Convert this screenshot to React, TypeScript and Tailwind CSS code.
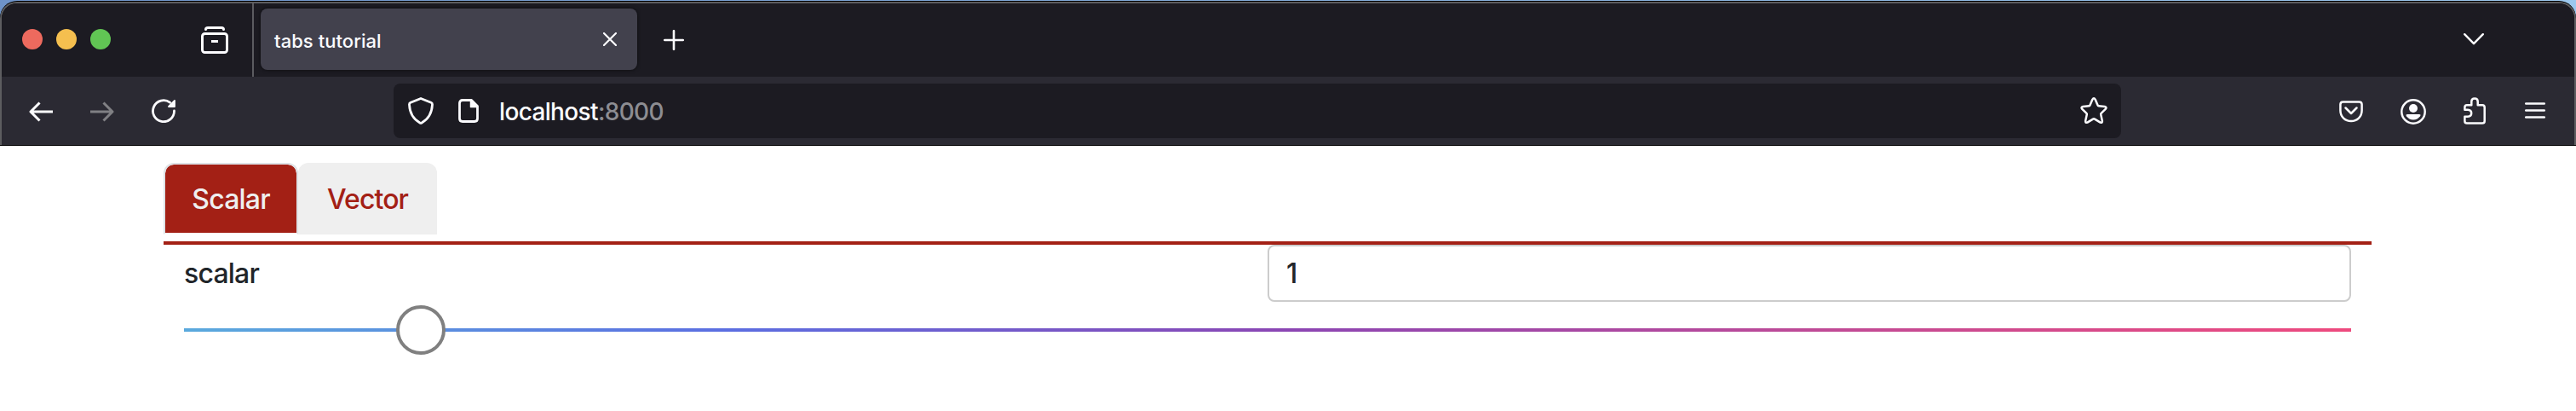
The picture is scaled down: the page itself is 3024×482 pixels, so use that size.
import type { ReactNode } from "react";

type IconProps = { w: number; h: number; className?: string; children: ReactNode };

function Icon({ w, h, className = "", children }: IconProps) {
  return (
    <svg
      width={w}
      height={h}
      viewBox={`0 0 ${w} ${h}`}
      fill="none"
      stroke="currentColor"
      strokeWidth={2.5}
      strokeLinecap="round"
      strokeLinejoin="round"
      className={`block shrink-0 ${className}`}
    >
      {children}
    </svg>
  );
}

function TabStrip() {
  return (
    <div className="flex h-[86px] bg-[#1c1b22]">
      <div className="flex w-[294px] items-center gap-4 pb-0.5 pl-6">
        <span className="size-6 rounded-full bg-[#ed6a5e]" />
        <span className="size-6 rounded-full bg-[#f5bf4f]" />
        <span className="size-6 rounded-full bg-[#61c554]" />
        <Icon w={32} h={32} className="ml-[90px] mt-0.5">
          <path d="M5.5 3.5C5.5 2 6.500 1.500 8 1.500H24C25.500 1.500 26.500 2 26.500 3.500" strokeWidth={3} />
          <rect x="1.500" y="8.500" width="29" height="22" rx="3" strokeWidth={3} />
          <path d="M12 17.500H20" strokeWidth={3} strokeLinecap="butt" />
        </Icon>
      </div>
      <div className="w-0.5 bg-[#5b5b60]" />
      <div className="ml-2 mt-1.5 flex h-[72px] w-[442px] items-center rounded-lg bg-[#42414d] pl-4 pr-6 shadow-[0_0_4px_rgba(0,0,0,0.6)]">
        <span className="mt-1 flex-1 font-['Inter'] text-[22px] font-medium leading-none tracking-[0.05px] text-[#fbfbfe]">
          tabs tutorial
        </span>
        <Icon w={16} h={16} className="text-[#fbfbfe]">
          <path d="M1 1L15 15M15 1L1 15" strokeWidth={2.2} />
        </Icon>
      </div>
      <Icon w={24} h={24} className="ml-[31px] mt-[31px]">
        <path d="M12 1.200V22.800M1.200 12H22.800" strokeWidth={2.600} />
      </Icon>
      <Icon w={24} h={14} className="ml-auto mr-[106px] mt-[35px]">
        <path d="M1.200 1.200L12 12.200L22.800 1.200" strokeWidth={2.400} />
      </Icon>
    </div>
  );
}

function AddressBar() {
  return (
    <div className="flex h-16 w-[2028px] items-center rounded-lg bg-[#1c1b22] pl-[17px] pr-4">
      <Icon w={30} h={32}>
        <path d="M15 1.500L27 6.300C28.200 6.800 28.600 7.600 28.500 8.800C28 18.500 24.500 25.500 15.800 30.200Q15 30.600 14.200 30.200C5.500 25.500 2 18.500 1.500 8.800C1.400 7.600 1.800 6.800 3 6.300Z" strokeWidth={2.800} />
      </Icon>
      <Icon w={24} h={28} className="ml-[29px]">
        <path d="M15.500 1.500H5Q1.500 1.500 1.500 5V23Q1.500 26.500 5 26.500H19Q22.500 26.500 22.500 23V8.500Z" strokeWidth={2.800} />
        <path d="M14.500 1.500V9.500H22.500Z" fill="currentColor" strokeWidth={1.500} />
      </Icon>
      <span className="ml-6 mt-0.5 flex-1 font-['Inter'] text-[28px] font-[450] leading-none tracking-[-0.65px] text-[#fbfbfe]">
        localhost<span className="text-[#8d8d92]">:8000</span>
      </span>
      <Icon w={32} h={32}>
        <path d="M14.400 2.600Q16 0 17.600 2.600L20.500 9.300Q20.800 10.100 21.700 10.200L28.800 11Q31.600 11.600 29.700 13.900L24.600 18.800Q24 19.400 24.200 20.300L25.800 27.600Q26.200 30.600 23.600 29.600L17 25.600Q16 25.100 15 25.600L8.400 29.600Q5.800 30.600 6.200 27.600L7.800 20.300Q8 19.400 7.400 18.800L2.300 13.900Q.4 11.600 3.200 11L10.300 10.200Q11.200 10.100 11.500 9.300Z" />
      </Icon>
    </div>
  );
}

function Toolbar() {
  return (
    <div className="flex h-20 items-center bg-[#2b2a33] pl-8">
      <Icon w={28} h={24} className="mt-px">
        <path d="M12.500 1.500L2 12L12.500 22.500M2 12H28" strokeWidth={3} strokeLinecap="butt" />
      </Icon>
      <Icon w={28} h={24} className="ml-11 mt-px text-[#808084]">
        <path d="M15.500 1.500L26 12L15.500 22.500M26 12H0" strokeWidth={3} strokeLinecap="butt" />
      </Icon>
      <Icon w={28} h={28} className="ml-11">
        <path d="M26.500 14A12.500 12.500 0 1 1 21.500 4.200" strokeWidth={2.800} />
        <path d="M27 2V9H20Z" fill="currentColor" strokeWidth={1.800} />
      </Icon>
      <div className="ml-64">
        <AddressBar />
      </div>
      <div className="ml-auto mr-[34px] flex items-center">
        <Icon w={28} h={26} className="mt-px">
          <path d="M4.500 1.500H23.500Q26.600 1.500 26.600 4.500V11.500C26.600 19 21 24 14 24S1.400 19 1.400 11.500V4.500Q1.400 1.500 4.500 1.500Z" />
          <path d="M7.500 8.500L14 15L20.500 8.500" />
        </Icon>
        <Icon w={30} h={30} className="ml-11 mt-0.5">
          <circle cx="15" cy="15" r="13.700" />
          <circle cx="15" cy="11" r="5" fill="currentColor" stroke="none" />
          <path d="M8.300 18H21.700Q24.500 18 23 20.300Q20 24.500 15 24.500T7 20.300Q5.500 18 8.300 18Z" fill="currentColor" stroke="none" />
        </Icon>
        <Icon w={26} h={32} className="ml-11">
          <path d="M1.400 14.800V12Q1.400 9.300 4 9.300H9.300V5Q9.300 1.400 13 1.400T16.700 5V9.300H22Q24.700 9.300 24.700 12V28Q24.700 30.600 22 30.600H4Q1.400 30.600 1.400 28V22.800H5Q9.200 22.500 9.200 18.800T5 14.800Z" />
        </Icon>
        <Icon w={24} h={20} className="ml-[46px]">
          <path d="M1.200 1.500H22.800M1.200 9.500H22.800M1.200 17.500H22.800" />
        </Icon>
      </div>
    </div>
  );
}

function Page() {
  return (
    <main className="flex flex-1 flex-col bg-white pr-[240px] pt-5 pl-[192px] font-['Inter'] text-[32px] font-[450] leading-none">
      <div className="flex h-[92px]">
        <button className="h-[84px] w-[158px] rounded-t-xl border-2 border-b-white border-[#dee2e6] bg-[#a32015] bg-clip-padding pt-0.5 text-[#efefef] tracking-[-0.8px]">
          Scalar
        </button>
        <button className="h-[84px] w-[163px] rounded-t-xl bg-[#efefef] pt-0.5 text-[#a32015] tracking-[-0.9px]">
          Vector
        </button>
      </div>
      <div className="h-1 bg-[#a32015]" />
      <div className="flex px-6">
        <label htmlFor="scalar" className="w-[1272px] pt-[18px] tracking-[-0.8px] text-[#212529]">
          scalar
        </label>
        <input
          id="scalar"
          defaultValue="1"
          className="h-[67px] w-[1272px] rounded-lg border-2 border-[#cccccc] pl-5 text-[#212529] outline-none"
        />
      </div>
      <div className="mx-6 mt-1 flex h-[58px] items-center bg-[linear-gradient(to_right,#5aa9dd_0%,#5b6ee1_25%,#8b46b3_51%,#c04a95_76%,#ee4a7e_100%)] bg-[length:100%_4px] bg-center bg-no-repeat pl-[249px]">
        <div className="size-[58px] rounded-full border-4 border-[#808080] bg-white" />
      </div>
    </main>
  );
}

export default function App() {
  return (
    <div className="flex h-[482px] w-[3024px] flex-col bg-white">
      <div className="h-[171px] bg-linear-to-r from-[#6e93c9] to-[#9cc8ee] pt-px">
        <header className="h-[170px] overflow-hidden rounded-t-[20px] bg-black pt-px text-[#fbfbfe]">
          <div className="h-[168px] overflow-hidden rounded-t-[20px] border-x-2 border-t-2 border-[#5d5d60]">
            <TabStrip />
            <Toolbar />
          </div>
        </header>
      </div>
      <Page />
    </div>
  );
}
